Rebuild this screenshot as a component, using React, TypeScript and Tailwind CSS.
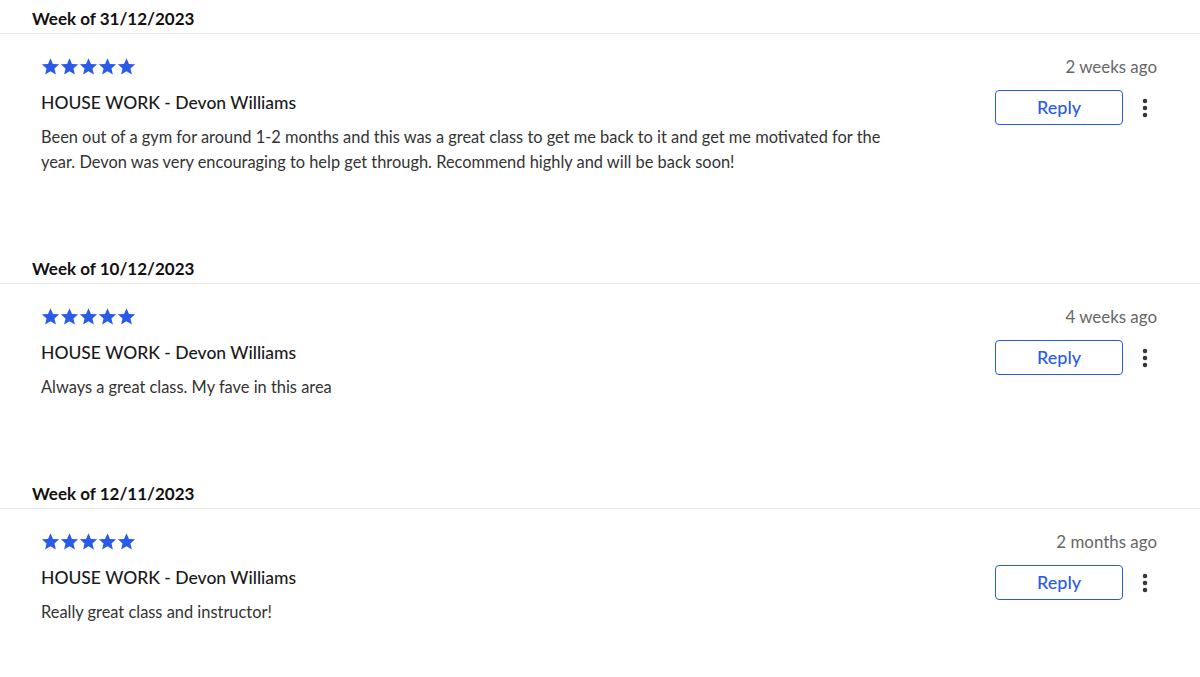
import { MoreVertical } from "lucide-react";

const reviews = [
  {
    week: "31/12/2023",
    ago: "2 weeks ago",
    title: "HOUSE WORK - Devon Williams",
    body: "Been out of a gym for around 1-2 months and this was a great class to get me back to it and get me motivated for the year. Devon was very encouraging to help get through. Recommend highly and will be back soon!",
  },
  {
    week: "10/12/2023",
    ago: "4 weeks ago",
    title: "HOUSE WORK - Devon Williams",
    body: "Always a great class. My fave in this area",
  },
  {
    week: "12/11/2023",
    ago: "2 months ago",
    title: "HOUSE WORK - Devon Williams",
    body: "Really great class and instructor!",
  },
];

function Star() {
  return (
    <svg viewBox="0 0 24 24" className="h-[19px] w-[19px]" fill="#2a5be8">
      <path d="M12 1.5l3.1 7.2 7.8.6-5.9 5.1 1.8 7.6L12 17.9 5.2 22l1.8-7.6L1.1 9.3l7.8-.6z" />
    </svg>
  );
}

function ReviewSection({ week, ago, title, body }) {
  return (
    <section>
      <h3 className="border-b border-[#e6e6e6] pt-[7px] pb-[2px] pl-8 text-[17px] leading-6 font-bold text-[#111]">
        Week of {week}
      </h3>
      <div className="flex justify-between pt-5 pb-[76px] pl-[41px] pr-[43px]">
        <div className="min-w-0">
          <div className="flex h-6 items-center">
            {[0, 1, 2, 3, 4].map((i) => (
              <Star key={i} />
            ))}
          </div>
          <div className="mt-[13px] text-[17.5px] leading-6 font-medium text-[#1a1a1a]">{title}</div>
          <p className="mt-[9px] max-w-[870px] text-[16.4px] leading-[25px] text-[#333]">{body}</p>
        </div>
        <div className="flex shrink-0 flex-col items-end">
          <span className="mt-[1px] text-[16.9px] leading-6 text-[#666]">{ago}</span>
          <div className="mt-[11px] flex items-center gap-[10px]">
            <button className="h-[35px] w-[128px] rounded-[4px] border border-[#2a5be8] text-[18px] font-medium text-[#2a5be8]">
              Reply
            </button>
            <MoreVertical className="h-6 w-6 text-[#333]" strokeWidth={2.5} />
          </div>
        </div>
      </div>
    </section>
  );
}

export default function App() {
  return (
    <div className="min-h-[677px] bg-white font-['Lato',sans-serif]">
      {reviews.map((r) => (
        <ReviewSection key={r.week} {...r} />
      ))}
    </div>
  );
}
